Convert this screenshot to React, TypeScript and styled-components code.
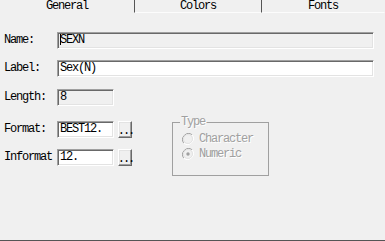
import styled, { createGlobalStyle } from "styled-components";

const GlobalStyle = createGlobalStyle`
  html, body {
    margin: 0;
    padding: 0;
    background: #f0f0f0;
  }
  body {
    font-family: "Liberation Mono", "Noto Sans CJK SC", monospace;
    font-size: 12px;
    color: #000;
  }
`;

const Page = styled.div`
  width: 385px;
  height: 241px;
  display: flex;
  flex-direction: column;
  background: #f0f0f0;
  overflow: hidden;
`;

const TabBar = styled.div`
  display: flex;
  height: 13px;
`;

const Tab = styled.div<{ $width: number; $active?: boolean; $last?: boolean }>`
  width: ${({ $width }) => $width}px;
  height: 13px;
  box-sizing: border-box;
  display: flex;
  justify-content: center;
  line-height: 12px;
  letter-spacing: -1.2px;
  border-right: 1px solid ${({ $last }) => ($last ? "transparent" : "#555")};
  border-bottom: 1px solid ${({ $active }) => ($active ? "transparent" : "#fcfcfc")};
`;

const Form = styled.div`
  display: flex;
  flex-direction: column;
  padding: 19px 11px 0 4px;
`;

const Row = styled.div<{ $top: number }>`
  display: flex;
  align-items: flex-start;
  margin-top: ${({ $top }) => $top}px;
`;

const Label = styled.div`
  width: 53px;
  flex: none;
  line-height: 12px;
  padding-top: 2px;
  letter-spacing: -1.2px;
  white-space: nowrap;
`;

const Field = styled.div<{ $width?: number; $readOnly?: boolean }>`
  ${({ $width }) => ($width ? `width: ${$width}px;` : "flex: 1;")}
  height: 17px;
  box-sizing: border-box;
  border: 1px solid;
  border-color: #a0a0a0 #fff #fff #a0a0a0;
  box-shadow: inset 1px 1px 0 #696969, inset -1px -1px 0 #e3e3e3;
  background: ${({ $readOnly }) => ($readOnly ? "#f0f0f0" : "#fff")};
  padding: 0 0 0 2px;
  line-height: 15px;
  letter-spacing: -1.2px;
  white-space: nowrap;
  overflow: hidden;
`;

const Caret = styled.span`
  display: inline-block;
  width: 1px;
  height: 11px;
  background: #000;
  vertical-align: -2px;
  margin-right: -1px;
`;

const DotsButton = styled.div`
  width: 14px;
  height: 17px;
  box-sizing: border-box;
  margin-left: 4px;
  border: 1px solid;
  border-color: #fff #696969 #696969 #fff;
  box-shadow: inset -1px -1px 0 #a0a0a0, inset 1px 1px 0 #e3e3e3;
  background: #f0f0f0;
  display: flex;
  justify-content: center;
  align-items: flex-end;
  line-height: 12px;
  letter-spacing: -2px;
  padding-left: 1px;
`;

const Lower = styled.div`
  display: flex;
  align-items: flex-start;
`;

const LeftColumn = styled.div`
  display: flex;
  flex-direction: column;
`;

const GroupBox = styled.fieldset`
  margin: 10px 0 0 40px;
  width: 97px;
  height: 60px;
  box-sizing: border-box;
  border: 1px solid #a0a0a0;
  padding: 4px 0 0 9px;
  color: #a0a0a0;
  text-shadow: 1px 1px 0 #fff;
  letter-spacing: -1.2px;
`;

const Legend = styled.legend`
  padding: 0 1px;
  margin-left: -2px;
  line-height: 12px;
`;

const RadioRow = styled.div`
  display: flex;
  align-items: center;
  gap: 5px;
  height: 14px;
  margin-bottom: 1px;
  line-height: 12px;
`;

const Radio = ({ checked }: { checked?: boolean }) => (
  <svg width="12" height="12" viewBox="0 0 12 12">
    <path d="M10.2 1.8 A6 6 0 0 0 1.8 10.2" fill="none" stroke="#a0a0a0" />
    <path d="M1.8 10.2 A6 6 0 0 0 10.2 1.8" fill="none" stroke="#fff" />
    <circle cx="6" cy="6" r="4.5" fill="#f0f0f0" stroke="#e3e3e3" />
    {checked && <circle cx="6" cy="6" r="1.7" fill="#a0a0a0" />}
  </svg>
);

const BottomLine = styled.div`
  margin-top: auto;
  height: 1px;
  background: #555;
`;

export default function App() {
  return (
    <>
      <GlobalStyle />
      <Page>
        <TabBar>
          <Tab $width={135} $active>General</Tab>
          <Tab $width={127}>Colors</Tab>
          <Tab $width={123} $last>Fonts</Tab>
        </TabBar>
        <Form>
          <Row $top={0}>
            <Label>Name:</Label>
            <Field $readOnly>
              <Caret />
              SEXN
            </Field>
          </Row>
          <Row $top={11}>
            <Label>Label:</Label>
            <Field>Sex(N)</Field>
          </Row>
          <Row $top={12}>
            <Label>Length:</Label>
            <Field $width={57} $readOnly>8</Field>
          </Row>
          <Lower>
            <LeftColumn>
              <Row $top={15}>
                <Label>Format:</Label>
                <Field $width={57}>BEST12.</Field>
                <DotsButton>...</DotsButton>
              </Row>
              <Row $top={11}>
                <Label>Informat</Label>
                <Field $width={57}>12.</Field>
                <DotsButton>...</DotsButton>
              </Row>
            </LeftColumn>
            <GroupBox disabled>
              <Legend>Type</Legend>
              <RadioRow>
                <Radio />
                Character
              </RadioRow>
              <RadioRow>
                <Radio checked />
                Numeric
              </RadioRow>
            </GroupBox>
          </Lower>
        </Form>
        <BottomLine />
      </Page>
    </>
  );
}
